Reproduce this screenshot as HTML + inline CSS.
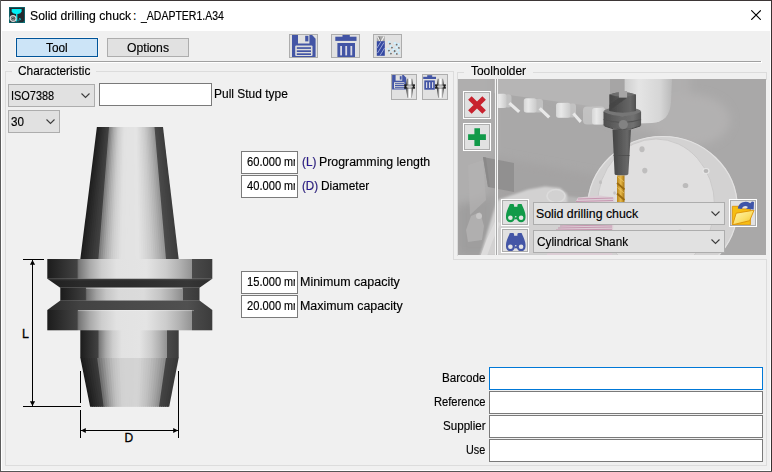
<!DOCTYPE html>
<html>
<head>
<meta charset="utf-8">
<title>Solid drilling chuck : _ADAPTER1.A34</title>
<style>
html,body{margin:0;padding:0;}
body{width:772px;height:472px;overflow:hidden;background:#f0f0f0;position:relative;
 font-family:"Liberation Sans",sans-serif;font-size:12px;color:#000;}
.abs,.t,.ln,.btn,.cb,.inp,.ib{position:absolute;box-sizing:border-box;}
.t{-webkit-text-stroke:0.16px #000;white-space:nowrap;line-height:14px;height:14px;transform-origin:0 50%;transform:scaleX(.953);}
.t.r{transform-origin:100% 50%;}
.ln{background:#dcdcdc;}
.btn{background:#e1e1e1;border:1px solid #adadad;text-align:center;}
.cb{background:#e1e1e1;border:1px solid #adadad;}
.cb svg{position:absolute;right:4px;top:8.4px;}
.inp{background:#fff;border:1px solid #7a7a7a;overflow:hidden;}
.ib{background:#e1e1e1;border:1px solid #adadad;overflow:hidden;}
.ibw{position:absolute;box-sizing:border-box;border:1px solid #fff;background:#e1e1e1;}
.ibw>div{position:absolute;left:0;top:0;right:0;bottom:0;border:1px solid #adadad;overflow:hidden;}
</style>
</head>
<body>
<!-- window frame -->
<div class="abs" style="left:0;top:0;width:772px;height:472px;background:#fff;"></div>
<div class="abs" style="left:2px;top:31px;width:768px;height:439px;background:#f0f0f0;"></div>
<div class="abs" style="left:0;top:0;width:772px;height:1px;background:#3d3636;"></div>
<div class="abs" style="left:0;top:0;width:1px;height:472px;background:#5c5c5c;"></div>
<div class="abs" style="left:771px;top:0;width:1px;height:472px;background:#3a3232;"></div>
<div class="abs" style="left:0;top:471px;width:772px;height:1px;background:#565656;"></div>

<!-- title icon -->
<svg class="abs" style="left:9px;top:7px" width="16" height="16" viewBox="0 0 16 16">
 <rect width="16" height="16" fill="#0c6f76"/>
 <path d="M0.800 0.800H15.200V13.800L13.800 15.200H0.800Z" fill="#23292e"/>
 <path d="M2.700 1.900H12.600V4.400Q12 6.400 8.800 6.900H6.600Q3.300 6.400 2.700 4.400Z" fill="#00f0f6"/>
 <rect x="7" y="6.500" width="1.400" height="8" fill="#00dfe6"/>
 <circle cx="4.100" cy="11.500" r="2.900" fill="#3a4044" stroke="#d4d4d4" stroke-width="1.300"/>
 <path d="M5.300 10.600A1.500 1.500 0 1 0 5.400 12.200H4.200" stroke="#b8b8b8" stroke-width="0.800" fill="none"/>
 <path d="M9.600 14.300L10.800 11L11.800 13.200" stroke="#00c4d0" stroke-width="0.800" fill="none"/>
</svg>
<div class="t" id="t_title" style="left:30.0px;top:9px;transform:scaleX(1.018);">Solid drilling chuck</div>
<div class="t" id="t_title2" style="left:133px;top:9px;transform:none;">:</div>
<div class="t" id="t_title3" style="left:141.0px;top:9px;transform:scaleX(0.875);">_ADAPTER1.A34</div>
<svg class="abs" style="left:751px;top:10px" width="10" height="10" viewBox="0 0 10 10"><path d="M0.300 0.300L9.800 9.800M9.800 0.300L0.300 9.800" stroke="#000" stroke-width="1.100"/></svg>

<!-- tabs/buttons -->
<div class="btn" style="left:16px;top:38px;width:82px;height:19px;background:#cce4f7;border-color:#005499;box-shadow:0 0 0 1px #f8f6f4;"></div>
<div class="t" id="t_tool" style="left:46.0px;top:41px;transform:scaleX(0.985);">Tool</div>
<div class="btn" style="left:107px;top:38px;width:82px;height:19px;"></div>
<div class="t" id="t_options" style="left:126.9px;top:41px;transform:scaleX(1.015);">Options</div>

<!-- toolbar icon buttons -->
<div class="ib" id="ib_save" style="left:289px;top:34px;width:29px;height:24px;"><svg class="abs" style="left:0;top:0" width="27" height="22" viewBox="290 35 27 22"><path d="M292 34H311.200L315.600 38.800V58H292Z" fill="#4355a5"/><rect x="298" y="34" width="11.400" height="9.500" fill="#e1e1e1"/><rect x="305.200" y="35.800" width="3.200" height="5.600" fill="#4355a5"/><rect x="295.200" y="45.500" width="17.300" height="10.500" rx="1" fill="#dcdcdc"/><rect x="296.800" y="47.200" width="14.200" height="1.700" fill="#4355a5"/><rect x="296.800" y="50.300" width="14.200" height="1.700" fill="#4355a5"/><rect x="296.800" y="53.300" width="14.200" height="1.700" fill="#4355a5"/></svg>
</div>
<div class="ib" id="ib_trash" style="left:331px;top:34px;width:29px;height:24px;"><svg class="abs" style="left:0;top:0" width="27" height="22" viewBox="332 35 27 22"><rect x="342.500" y="34" width="7.300" height="3" fill="#4355a5"/><rect x="335.300" y="36.700" width="21.200" height="4.200" fill="#4355a5"/><rect x="337.400" y="43" width="17.600" height="15" fill="#4355a5"/><rect x="340.200" y="46" width="1.800" height="9.400" fill="#d8d8e4"/><rect x="345.300" y="46" width="1.800" height="9.400" fill="#d8d8e4"/><rect x="350.400" y="46" width="1.800" height="9.400" fill="#d8d8e4"/></svg>
</div>
<div class="ib" id="ib_tool" style="left:373px;top:34px;width:29px;height:24px;"><svg class="abs" style="left:0;top:0" width="27" height="22" viewBox="374 35 27 22"><rect x="376.800" y="36.200" width="8" height="5.200" fill="#a8a8a8"/><path d="M377.500 36.500L380 41M384 36.500L381.500 41" stroke="#f4f4f4" stroke-width="1.200"/><path d="M378.800 36.400L380.600 41" stroke="#555" stroke-width="0.600"/><rect x="376.800" y="41.200" width="8" height="14.600" fill="#3448a2"/><path d="M377 48L381 41.500M377.500 53L384 42.500M380 55.500L384.600 48" stroke="#9aa6d6" stroke-width="1"/><g fill="#dff6ff" stroke="#c2ecff" stroke-width="0.500"><rect x="388.500" y="41.500" width="1.600" height="1.600"/><rect x="394" y="42.500" width="2" height="1.600"/><rect x="397.500" y="43.500" width="1.800" height="1.800"/><rect x="390" y="45.500" width="1.800" height="1.600"/><rect x="395.500" y="46.500" width="1.800" height="1.600"/><rect x="387.500" y="48.500" width="1.600" height="1.600"/><rect x="392.500" y="49" width="2" height="1.800"/><rect x="397" y="49.500" width="1.800" height="1.600"/><rect x="389" y="51.500" width="1.800" height="1.600"/><rect x="394.500" y="52" width="2" height="1.800"/><rect x="398.500" y="52.500" width="1.400" height="1.400"/></g><g fill="#6e6e6e" stroke="#6e6e6e" stroke-width="0.300"><rect x="389.500" y="43" width="1.200" height="1.200"/><rect x="396" y="44" width="1.200" height="1.200"/><rect x="391.500" y="47" width="1.200" height="1.200"/><rect x="398.500" y="47.500" width="1.200" height="1.200"/><rect x="388.500" y="50" width="1.200" height="1.200"/><rect x="394" y="50.800" width="1.200" height="1.200"/><rect x="390.500" y="53" width="1.200" height="1.200"/><rect x="396.300" y="53.600" width="1.200" height="1.200"/></g></svg>
</div>

<!-- separator -->
<div class="ln" style="left:8px;top:61px;width:753px;height:1px;background:#a0a0a0;"></div>
<div class="ln" style="left:8px;top:62px;width:754px;height:1px;background:#fff;"></div><div class="ln" style="left:761px;top:61px;width:1px;height:1px;background:#fff;"></div>

<!-- Characteristic group -->
<div class="ln" style="left:5px;top:71px;width:1px;height:395px;"></div>
<div class="ln" style="left:5px;top:465px;width:762px;height:1px;"></div>
<div class="ln" style="left:766px;top:259px;width:1px;height:207px;"></div>
<div class="ln" style="left:5px;top:71px;width:7px;height:1px;"></div>
<div class="ln" style="left:96px;top:71px;width:358px;height:1px;"></div>
<div class="ln" style="left:453px;top:71px;width:1px;height:189px;"></div>
<div class="ln" style="left:453px;top:259px;width:314px;height:1px;"></div>
<div class="t" id="t_char" style="left:17.8px;top:64px;transform:scaleX(0.986);">Characteristic</div>

<!-- Toolholder group -->
<div class="ln" style="left:457px;top:72px;width:7px;height:1px;"></div>
<div class="ln" style="left:533px;top:72px;width:234px;height:1px;"></div>
<div class="ln" style="left:766px;top:72px;width:1px;height:8px;"></div>
<div class="ln" style="left:457px;top:72px;width:1px;height:184px;"></div>
<div class="t" id="t_th" style="left:471.0px;top:64px;transform:scaleX(0.995);">Toolholder</div>


<!-- characteristic controls -->
<div class="cb" style="left:8px;top:84px;width:87px;height:23px;"><svg width="9" height="6" viewBox="0 0 9 6"><path d="M0.5 0.5L4.5 4.5L8.5 0.5" stroke="#3c3c3c" stroke-width="1.1" fill="none"/></svg></div>
<div class="t" id="t_iso" style="left:11.2px;top:89px;transform:scaleX(0.911);">ISO7388</div>
<div class="inp" style="left:99px;top:83px;width:113px;height:23px;"></div>
<div class="t" id="t_pull" style="left:213.5px;top:87px;transform:scaleX(0.997);">Pull Stud type</div>
<div class="cb" style="left:8px;top:110px;width:52px;height:23px;"><svg width="9" height="6" viewBox="0 0 9 6"><path d="M0.5 0.5L4.5 4.5L8.5 0.5" stroke="#3c3c3c" stroke-width="1.1" fill="none"/></svg></div>
<div class="t" id="t_30" style="left:11.1px;top:115px;transform:scaleX(0.971);">30</div>

<div class="ib" id="ib_s2" style="left:391px;top:74px;width:26px;height:26px;"><svg class="abs" style="left:0;top:0" width="24" height="24" viewBox="392 75 24 24"><path d="M392.100 75.100H403.600L406.200 77.800V89.500H392.100Z" fill="#4355a5"/><rect x="395.600" y="75.100" width="6.600" height="5.600" fill="#e1e1e1"/><rect x="399.800" y="76.200" width="1.800" height="3.400" fill="#4355a5"/><rect x="394" y="82.200" width="10.400" height="6.300" fill="#dcdcdc"/><rect x="395" y="83.200" width="9" height="1" fill="#4355a5"/><rect x="395" y="85" width="9" height="1" fill="#4355a5"/><rect x="395" y="86.800" width="9" height="1" fill="#4355a5"/><defs><linearGradient id="gm404" x1="405.6" y1="0" x2="413.6" y2="0" gradientUnits="userSpaceOnUse"><stop offset="0" stop-color="#111"/><stop offset="0.22" stop-color="#777"/><stop offset="0.42" stop-color="#fff"/><stop offset="0.6" stop-color="#fff"/><stop offset="0.8" stop-color="#888"/><stop offset="1" stop-color="#111"/></linearGradient></defs><path d="M407.0 78.7L412.2 78.7L413.2 84.6L415.0 84.6L415.0 85.6L413.8 86.6L415.0 87.6L415.0 88.6L413.2 88.6L411.8 97.8L407.4 97.8L406.0 88.6L404.2 88.6L404.2 87.6L405.4 86.6L404.2 85.6L404.2 84.6L406.0 84.6Z" fill="url(#gm404)"/><rect x="404.2" y="84.600" width="10.800" height="4" fill="#222" opacity="0.550"/><ellipse cx="409.6" cy="86.600" rx="3.200" ry="1.300" fill="#c8c8c8"/></svg></div>
<div class="ib" id="ib_t2" style="left:422px;top:74px;width:26px;height:26px;"><svg class="abs" style="left:0;top:0" width="24" height="24" viewBox="423 75 24 24"><rect x="427.200" y="75.200" width="5" height="2" fill="#4355a5"/><rect x="423.200" y="76.800" width="12.800" height="2.200" fill="#4355a5"/><rect x="424.300" y="80.400" width="10.500" height="9.300" fill="#4355a5"/><rect x="426" y="82.200" width="1.200" height="5.800" fill="#d8d8e4"/><rect x="429" y="82.200" width="1.200" height="5.800" fill="#d8d8e4"/><rect x="432" y="82.200" width="1.200" height="5.800" fill="#d8d8e4"/><defs><linearGradient id="gm435" x1="436.4" y1="0" x2="444.4" y2="0" gradientUnits="userSpaceOnUse"><stop offset="0" stop-color="#111"/><stop offset="0.22" stop-color="#777"/><stop offset="0.42" stop-color="#fff"/><stop offset="0.6" stop-color="#fff"/><stop offset="0.8" stop-color="#888"/><stop offset="1" stop-color="#111"/></linearGradient></defs><path d="M437.8 78.7L443.0 78.7L444.0 84.6L445.8 84.6L445.8 85.6L444.6 86.6L445.8 87.6L445.8 88.6L444.0 88.6L442.6 97.8L438.2 97.8L436.8 88.6L435.0 88.6L435.0 87.6L436.2 86.6L435.0 85.6L435.0 84.6L436.8 84.6Z" fill="url(#gm435)"/><rect x="435.0" y="84.600" width="10.800" height="4" fill="#222" opacity="0.550"/><ellipse cx="440.4" cy="86.600" rx="3.200" ry="1.300" fill="#c8c8c8"/></svg></div>

<svg class="abs" style="left:0;top:0" width="240" height="472" viewBox="0 0 240 472">
<defs><linearGradient id="tg1" x1="0" y1="0" x2="1" y2="0"><stop offset="0" stop-color="#1c1c1c"/><stop offset="0.18" stop-color="#424242"/><stop offset="0.19" stop-color="#767676"/><stop offset="0.26" stop-color="#aaaaaa"/><stop offset="0.33" stop-color="#cdcdcd"/><stop offset="0.42" stop-color="#e2e2e2"/><stop offset="0.6" stop-color="#e4e4e4"/><stop offset="0.72" stop-color="#cccccc"/><stop offset="0.8" stop-color="#b2b2b2"/><stop offset="0.88" stop-color="#929292"/><stop offset="0.88" stop-color="#4a4a4a"/><stop offset="1" stop-color="#3c3c3c"/></linearGradient><linearGradient id="tg2" x1="0" y1="0" x2="1" y2="0"><stop offset="0" stop-color="#1b1b1b"/><stop offset="0.18" stop-color="#3f3f3f"/><stop offset="0.19" stop-color="#717171"/><stop offset="0.26" stop-color="#a3a3a3"/><stop offset="0.33" stop-color="#c5c5c5"/><stop offset="0.42" stop-color="#d9d9d9"/><stop offset="0.6" stop-color="#dbdbdb"/><stop offset="0.72" stop-color="#c4c4c4"/><stop offset="0.8" stop-color="#ababab"/><stop offset="0.88" stop-color="#8c8c8c"/><stop offset="0.88" stop-color="#474747"/><stop offset="1" stop-color="#3a3a3a"/></linearGradient><linearGradient id="tgd1" x1="0" y1="0" x2="1" y2="0"><stop offset="0" stop-color="#1e1e1e"/><stop offset="0.2" stop-color="#2a2a2a"/><stop offset="0.5" stop-color="#2c2c2c"/><stop offset="0.85" stop-color="#363636"/><stop offset="1" stop-color="#2c2c2c"/></linearGradient><linearGradient id="tgd2" x1="0" y1="0" x2="1" y2="0"><stop offset="0" stop-color="#2a2a2a"/><stop offset="0.2" stop-color="#424242"/><stop offset="0.5" stop-color="#4a4a4a"/><stop offset="0.85" stop-color="#505050"/><stop offset="1" stop-color="#3a3a3a"/></linearGradient></defs>
<clipPath id="tc1"><polygon points="96.9,127 163,127 178.7,259.2 80.3,259.2"/></clipPath>
<g clip-path="url(#tc1)">
<polygon fill="#1e1e1e" points="93.73,126 99.19,126 83.41,260.2 75.24,260.2"/>
<polygon fill="#232323" points="98.13,126 100.56,126 85.47,260.2 81.83,260.2"/>
<polygon fill="#272727" points="99.51,126 101.93,126 87.52,260.2 83.89,260.2"/>
<polygon fill="#2b2b2b" points="100.88,126 103.3,126 89.58,260.2 85.95,260.2"/>
<polygon fill="#303030" points="102.25,126 104.68,126 91.63,260.2 88,260.2"/>
<polygon fill="#343434" points="103.62,126 106.05,126 93.69,260.2 90.06,260.2"/>
<polygon fill="#393939" points="104.99,126 107.42,126 95.74,260.2 92.11,260.2"/>
<polygon fill="#3d3d3d" points="106.37,126 108.79,126 97.8,260.2 94.17,260.2"/>
<polygon fill="#414141" points="107.74,126 110.16,126 99.85,260.2 96.22,260.2"/>
<polygon fill="#7e7e7e" points="109.11,126 111.54,126 101.91,260.2 98.28,260.2"/>
<polygon fill="#8d8d8d" points="110.48,126 112.91,126 103.96,260.2 100.33,260.2"/>
<polygon fill="#9c9c9c" points="111.85,126 114.28,126 106.02,260.2 102.39,260.2"/>
<polygon fill="#aaaaaa" points="113.23,126 115.65,126 108.07,260.2 104.44,260.2"/>
<polygon fill="#b5b5b5" points="114.6,126 117.02,126 110.13,260.2 106.5,260.2"/>
<polygon fill="#bfbfbf" points="115.97,126 118.4,126 112.18,260.2 108.55,260.2"/>
<polygon fill="#c9c9c9" points="117.34,126 119.77,126 114.24,260.2 110.61,260.2"/>
<polygon fill="#d0d0d0" points="118.71,126 121.14,126 116.29,260.2 112.66,260.2"/>
<polygon fill="#d5d5d5" points="120.09,126 122.51,126 118.35,260.2 114.72,260.2"/>
<polygon fill="#dadada" points="121.46,126 123.88,126 120.4,260.2 116.77,260.2"/>
<polygon fill="#dfdfdf" points="122.83,126 125.26,126 122.46,260.2 118.83,260.2"/>
<polygon fill="#e2e2e2" points="124.2,126 126.63,126 124.52,260.2 120.88,260.2"/>
<polygon fill="#e2e2e2" points="125.57,126 128,126 126.57,260.2 122.94,260.2"/>
<polygon fill="#e3e3e3" points="126.95,126 129.37,126 128.63,260.2 124.99,260.2"/>
<polygon fill="#e3e3e3" points="128.32,126 130.74,126 130.68,260.2 127.05,260.2"/>
<polygon fill="#e3e3e3" points="129.69,126 132.12,126 132.74,260.2 129.1,260.2"/>
<polygon fill="#e3e3e3" points="131.06,126 133.49,126 134.79,260.2 131.16,260.2"/>
<polygon fill="#e3e3e3" points="132.43,126 134.86,126 136.85,260.2 133.21,260.2"/>
<polygon fill="#e4e4e4" points="133.81,126 136.23,126 138.9,260.2 135.27,260.2"/>
<polygon fill="#e4e4e4" points="135.18,126 137.6,126 140.96,260.2 137.32,260.2"/>
<polygon fill="#e1e1e1" points="136.55,126 138.98,126 143.01,260.2 139.38,260.2"/>
<polygon fill="#dddddd" points="137.92,126 140.35,126 145.07,260.2 141.43,260.2"/>
<polygon fill="#d9d9d9" points="139.29,126 141.72,126 147.12,260.2 143.49,260.2"/>
<polygon fill="#d5d5d5" points="140.67,126 143.09,126 149.18,260.2 145.54,260.2"/>
<polygon fill="#d0d0d0" points="142.04,126 144.46,126 151.23,260.2 147.6,260.2"/>
<polygon fill="#cccccc" points="143.41,126 145.84,126 153.29,260.2 149.65,260.2"/>
<polygon fill="#c6c6c6" points="144.78,126 147.21,126 155.34,260.2 151.71,260.2"/>
<polygon fill="#bfbfbf" points="146.15,126 148.58,126 157.4,260.2 153.76,260.2"/>
<polygon fill="#b8b8b8" points="147.53,126 149.95,126 159.45,260.2 155.82,260.2"/>
<polygon fill="#b1b1b1" points="148.9,126 151.32,126 161.51,260.2 157.87,260.2"/>
<polygon fill="#a8a8a8" points="150.27,126 152.7,126 163.56,260.2 159.93,260.2"/>
<polygon fill="#9f9f9f" points="151.64,126 154.07,126 165.62,260.2 161.98,260.2"/>
<polygon fill="#969696" points="153.01,126 155.44,126 167.67,260.2 164.04,260.2"/>
<polygon fill="#4a4a4a" points="154.39,126 156.81,126 169.73,260.2 166.09,260.2"/>
<polygon fill="#474747" points="155.76,126 158.18,126 171.78,260.2 168.15,260.2"/>
<polygon fill="#454545" points="157.13,126 159.56,126 173.84,260.2 170.2,260.2"/>
<polygon fill="#424242" points="158.5,126 160.93,126 175.89,260.2 172.26,260.2"/>
<polygon fill="#404040" points="159.87,126 162.3,126 177.95,260.2 174.31,260.2"/>
<polygon fill="#3d3d3d" points="161.25,126 166.17,126 183.75,260.2 176.37,260.2"/>
</g>
<clipPath id="tc2"><polygon points="80.3,357.8 178.7,357.8 169.2,406.7 90.1,406.7"/></clipPath>
<g clip-path="url(#tc2)">
<polygon fill="#1c1c1c" points="75.16,356.8 83.75,356.8 93.21,407.7 86.37,407.7"/>
<polygon fill="#212121" points="82.17,356.8 86.22,356.8 95.18,407.7 91.95,407.7"/>
<polygon fill="#262626" points="84.64,356.8 88.69,356.8 97.15,407.7 93.92,407.7"/>
<polygon fill="#2b2b2b" points="87.11,356.8 91.16,356.8 99.12,407.7 95.89,407.7"/>
<polygon fill="#303030" points="89.58,356.8 93.63,356.8 101.08,407.7 97.86,407.7"/>
<polygon fill="#353535" points="92.05,356.8 96.1,356.8 103.05,407.7 99.82,407.7"/>
<polygon fill="#3a3a3a" points="94.52,356.8 98.57,356.8 105.02,407.7 101.79,407.7"/>
<polygon fill="#6f6f6f" points="96.99,356.8 101.04,356.8 106.99,407.7 103.76,407.7"/>
<polygon fill="#7f7f7f" points="99.46,356.8 103.51,356.8 108.95,407.7 105.73,407.7"/>
<polygon fill="#8f8f8f" points="101.93,356.8 105.98,356.8 110.92,407.7 107.69,407.7"/>
<polygon fill="#9f9f9f" points="104.4,356.8 108.45,356.8 112.89,407.7 109.66,407.7"/>
<polygon fill="#ababab" points="106.87,356.8 110.92,356.8 114.86,407.7 111.63,407.7"/>
<polygon fill="#b7b7b7" points="109.34,356.8 113.39,356.8 116.82,407.7 113.6,407.7"/>
<polygon fill="#c0c0c0" points="111.81,356.8 115.86,356.8 118.79,407.7 115.56,407.7"/>
<polygon fill="#c6c6c6" points="114.28,356.8 118.33,356.8 120.76,407.7 117.53,407.7"/>
<polygon fill="#cbcbcb" points="116.75,356.8 120.8,356.8 122.73,407.7 119.5,407.7"/>
<polygon fill="#d1d1d1" points="119.22,356.8 123.27,356.8 124.69,407.7 121.47,407.7"/>
<polygon fill="#d2d2d2" points="121.69,356.8 125.74,356.8 126.66,407.7 123.44,407.7"/>
<polygon fill="#d3d3d3" points="124.16,356.8 128.21,356.8 128.63,407.7 125.4,407.7"/>
<polygon fill="#d3d3d3" points="126.63,356.8 130.68,356.8 130.6,407.7 127.37,407.7"/>
<polygon fill="#d3d3d3" points="129.1,356.8 133.15,356.8 132.57,407.7 129.34,407.7"/>
<polygon fill="#d3d3d3" points="131.57,356.8 135.62,356.8 134.53,407.7 131.31,407.7"/>
<polygon fill="#d4d4d4" points="134.04,356.8 138.09,356.8 136.5,407.7 133.27,407.7"/>
<polygon fill="#d4d4d4" points="136.51,356.8 140.56,356.8 138.47,407.7 135.24,407.7"/>
<polygon fill="#d2d2d2" points="138.98,356.8 143.03,356.8 140.44,407.7 137.21,407.7"/>
<polygon fill="#cdcdcd" points="141.45,356.8 145.5,356.8 142.4,407.7 139.18,407.7"/>
<polygon fill="#c8c8c8" points="143.92,356.8 147.97,356.8 144.37,407.7 141.14,407.7"/>
<polygon fill="#c4c4c4" points="146.39,356.8 150.44,356.8 146.34,407.7 143.11,407.7"/>
<polygon fill="#bfbfbf" points="148.86,356.8 152.91,356.8 148.31,407.7 145.08,407.7"/>
<polygon fill="#b8b8b8" points="151.33,356.8 155.38,356.8 150.27,407.7 147.05,407.7"/>
<polygon fill="#b1b1b1" points="153.8,356.8 157.85,356.8 152.24,407.7 149.01,407.7"/>
<polygon fill="#a9a9a9" points="156.27,356.8 160.32,356.8 154.21,407.7 150.98,407.7"/>
<polygon fill="#a1a1a1" points="158.74,356.8 162.79,356.8 156.18,407.7 152.95,407.7"/>
<polygon fill="#979797" points="161.21,356.8 165.26,356.8 158.14,407.7 154.92,407.7"/>
<polygon fill="#8d8d8d" points="163.68,356.8 167.73,356.8 160.11,407.7 156.89,407.7"/>
<polygon fill="#444444" points="166.15,356.8 170.2,356.8 162.08,407.7 158.85,407.7"/>
<polygon fill="#414141" points="168.62,356.8 172.67,356.8 164.05,407.7 160.82,407.7"/>
<polygon fill="#3f3f3f" points="171.09,356.8 175.14,356.8 166.01,407.7 162.79,407.7"/>
<polygon fill="#3c3c3c" points="173.56,356.8 177.61,356.8 167.98,407.7 164.76,407.7"/>
<polygon fill="#393939" points="176.03,356.8 183.83,356.8 172.94,407.7 166.72,407.7"/>
</g>
<rect x="80.3" y="330" width="98.4" height="28" fill="url(#tg1)"/>
<rect x="47.3" y="259" width="165" height="19.8" fill="url(#tg1)"/>
<polygon points="47.3,278.7 212.3,278.7 199.5,287.8 60.3,287.8" fill="url(#tgd1)"/>
<rect x="60.3" y="287.7" width="139.2" height="13" fill="url(#tg2)"/>
<polygon points="60.3,300.6 199.5,300.6 212.3,310 47.3,310" fill="url(#tgd2)"/>
<rect x="47.3" y="310" width="165" height="20.3" fill="url(#tg1)"/>
<rect x="86" y="287.8" width="96" height="1.2" fill="#fff" opacity="0.3"/>
<rect x="78" y="310" width="116" height="1.1" fill="#fff" opacity="0.3"/>
<rect x="47.3" y="278.7" width="165" height="1.6" fill="#fff" opacity="0.08"/>
<g stroke="#000" stroke-width="1" fill="none" shape-rendering="crispEdges">
<path d="M23 259.5H44M23 406.5H81M32.5 260V406M80.5 371V403M80.5 410V438M178.5 371V438M81 430.5H178"/>
</g>
<g fill="#000">
<path d="M32.5 260l-2.6 4.800h5.200zM32.500 406l-2.600-4.800h5.200zM81 430.500l4.800-2.600v5.200zM178 430.500l-4.800-2.600v5.200z"/>
</g>
<text x="22" y="338.3" font-family="Liberation Sans, sans-serif" font-size="12.4" fill="#000" stroke="#000" stroke-width="0.3">L</text>
<text x="124.5" y="442" font-family="Liberation Sans, sans-serif" font-size="12" fill="#000" stroke="#000" stroke-width="0.3">D</text>
</svg>

<!-- numeric fields -->
<div class="inp" style="left:241px;top:151px;width:57px;height:23px;"><div class="abs" style="left:0;top:0;width:53px;height:21px;overflow:hidden;"><div class="t" id="t_f1" style="left:5px;top:3px;transform:scaleX(.93);">60.000</div><div class="t" id="t_u1" style="left:41.700px;top:3px;transform:scaleX(.9);">mm</div></div></div>
<div class="inp" style="left:241px;top:175px;width:57px;height:23px;"><div class="abs" style="left:0;top:0;width:53px;height:21px;overflow:hidden;"><div class="t" id="t_f2" style="left:5px;top:3px;transform:scaleX(.93);">40.000</div><div class="t" id="t_u2" style="left:41.700px;top:3px;transform:scaleX(.9);">mm</div></div></div>
<div class="inp" style="left:241px;top:271px;width:57px;height:23px;"><div class="abs" style="left:0;top:0;width:53px;height:21px;overflow:hidden;"><div class="t" id="t_f3" style="left:5px;top:3px;transform:scaleX(.93);">15.000</div><div class="t" id="t_u3" style="left:41.700px;top:3px;transform:scaleX(.9);">mm</div></div></div>
<div class="inp" style="left:241px;top:295px;width:57px;height:23px;"><div class="abs" style="left:0;top:0;width:53px;height:21px;overflow:hidden;"><div class="t" id="t_f4" style="left:5px;top:3px;transform:scaleX(.93);">20.000</div><div class="t" id="t_u4" style="left:41.700px;top:3px;transform:scaleX(.9);">mm</div></div></div>
<div class="t" id="t_l1a" style="left:301.5px;top:155px;transform:scaleX(0.977);color:#2b1a9a;">(L)</div>
<div class="t" id="t_l1" style="left:318.8px;top:155px;transform:scaleX(1.029);">Programming length</div>
<div class="t" id="t_l2a" style="left:301.5px;top:179px;transform:scaleX(0.967);color:#2b1a9a;">(D)</div>
<div class="t" id="t_l2" style="left:320.7px;top:179px;transform:scaleX(0.99);">Diameter</div>
<div class="t" id="t_l3" style="left:299.7px;top:275px;transform:scaleX(1.04);">Minimum capacity</div>
<div class="t" id="t_l4" style="left:299.7px;top:299px;transform:scaleX(1.034);">Maximum capacity</div>

<!-- bottom right fields -->
<div class="inp" style="left:489px;top:367px;width:274px;height:23px;border-color:#0078d7;"></div>
<div class="inp" style="left:489px;top:391px;width:274px;height:23px;"></div>
<div class="inp" style="left:489px;top:415px;width:274px;height:23px;"></div>
<div class="inp" style="left:489px;top:439px;width:274px;height:23px;"></div>
<div class="t" id="t_bar" style="left:442.3px;top:371px;transform:scaleX(0.97);">Barcode</div>
<div class="t" id="t_ref" style="left:433.8px;top:395px;transform:scaleX(0.93);">Reference</div>
<div class="t" id="t_sup" style="left:442.5px;top:419px;transform:scaleX(0.966);">Supplier</div>
<div class="t" id="t_use" style="left:466.1px;top:443px;transform:scaleX(0.9);">Use</div>

<!-- photo background of toolholder panel -->
<svg class="abs" style="left:458px;top:79px" width="308" height="176" viewBox="458 79 308 176">
<defs>
 <filter id="bl1" x="-5%" y="-5%" width="110%" height="110%"><feGaussianBlur stdDeviation="0.7"/></filter>
 <filter id="bl2" x="-10%" y="-10%" width="120%" height="120%"><feGaussianBlur stdDeviation="1"/></filter>
 <filter id="bl4" x="-20%" y="-20%" width="140%" height="140%"><feGaussianBlur stdDeviation="4"/></filter>
 <linearGradient id="gbg" x1="0" y1="0" x2="0" y2="1"><stop offset="0" stop-color="#adadad"/><stop offset="1" stop-color="#a2a2a2"/></linearGradient>
 <linearGradient id="gsp" x1="0" y1="0" x2="1" y2="0"><stop offset="0" stop-color="#cecece"/><stop offset="0.300" stop-color="#e4e4e4"/><stop offset="0.750" stop-color="#d6d6d6"/><stop offset="1" stop-color="#bababa"/></linearGradient>
 <linearGradient id="gpot" x1="0" y1="0" x2="1" y2="0"><stop offset="0" stop-color="#d6d6d6"/><stop offset="0.350" stop-color="#e8e8e8"/><stop offset="1" stop-color="#cacaca"/></linearGradient>
 <linearGradient id="ghold" x1="0" y1="0" x2="1" y2="0"><stop offset="0" stop-color="#444"/><stop offset="0.450" stop-color="#585858"/><stop offset="0.800" stop-color="#676767"/><stop offset="1" stop-color="#505050"/></linearGradient>
 <linearGradient id="ghold2" x1="0" y1="0" x2="1" y2="0"><stop offset="0" stop-color="#4e4e4e"/><stop offset="0.450" stop-color="#686868"/><stop offset="0.800" stop-color="#707070"/><stop offset="1" stop-color="#565656"/></linearGradient>
 <linearGradient id="gdrill" x1="0" y1="0" x2="1" y2="0"><stop offset="0" stop-color="#b8861e"/><stop offset="0.5" stop-color="#e6b84a"/><stop offset="1" stop-color="#a87410"/></linearGradient>
</defs>
<rect x="458" y="79" width="308" height="176" fill="#a9a8a8"/>
<g filter="url(#bl4)">
 <!-- lighter band around pots -->
 <polygon points="494,70 690,70 690,100 700,140 640,130 612,122" fill="#b0afaf"/>
 <!-- lighter halo right of spindle -->
 <ellipse cx="690" cy="120" rx="40" ry="26" fill="#b2b1b1"/>
 <!-- slightly darker lower-left region -->
 <polygon points="494,156 600,176 600,200 494,200" fill="#a4a3a3"/>
 <!-- left panel -->
 <polygon points="450,70 494,70 494,150 484,200 450,205" fill="#afaeae"/>
 <polygon points="458,205 494,195 494,256 458,256" fill="#9f9e9e"/>
</g>
<g filter="url(#bl2)">
 <!-- light horizontal cylinder bottom centre -->
 <path d="M480 256C486 238 492 214 498 200L528 189.500L545 186.500L560 188L567 194L567 256Z" fill="#d2d1d1"/>
 <path d="M567 196L580 198L580 256L567 256Z" fill="#b6b5b5"/>
</g>
<g filter="url(#bl1)">
 <!-- plate -->
 <polygon points="483,157 514,163 514,192 488,187" fill="#919090"/>
 <polygon points="483,157 486,157.500 490,187 488,187" fill="#8a8989"/>
 <!-- left panel blobs -->
 <polygon points="468,165 483,160 486,200 470,215" fill="#b3b2b2" opacity="0.700"/>
 <path d="M471 216L480 212L484 226L482 240L468 242L466 230Z" fill="#b4b3b3" opacity="0.800"/>
 <circle cx="479" cy="216" r="3" fill="#c6c5c5"/>
 <!-- white ring band -->
 <path d="M483 258C487 246 491 236 498 222" stroke="#dddcdc" stroke-width="6" fill="none"/>
 <ellipse cx="556" cy="196" rx="9" ry="6.500" fill="none" stroke="#e0dfdf" stroke-width="1.600" opacity="0.700"/>
 <!-- disk -->
 <ellipse cx="662.500" cy="208" rx="75.300" ry="72" fill="#d3d2d2"/>
 <ellipse cx="662.500" cy="208" rx="74.800" ry="71.500" fill="none" stroke="#e2e1e1" stroke-width="1.200"/>
 <ellipse cx="656" cy="205" rx="58.500" ry="66" fill="#e0dfdf"/>
 <ellipse cx="656" cy="205" rx="58.500" ry="66" fill="none" stroke="#c6c5c5" stroke-width="0.800"/>
 <!-- holes -->
 <ellipse cx="642" cy="149.300" rx="2.600" ry="3" fill="#bebdbd"/>
 <ellipse cx="644.800" cy="170.600" rx="2.600" ry="2.800" fill="#bfbebe"/>
 <ellipse cx="685.500" cy="185.500" rx="2.800" ry="2.600" fill="#bcbbbb"/>
 <ellipse cx="706" cy="171" rx="3.600" ry="3" fill="#e6e6e6"/>
 <ellipse cx="706" cy="171" rx="2.400" ry="1.900" fill="#b8b7b7"/>
 <ellipse cx="600.500" cy="182.200" rx="1.400" ry="2" fill="#c0bfbf"/>
 <ellipse cx="614.600" cy="193" rx="1.400" ry="1.800" fill="#c4c3c3"/>
 <ellipse cx="680" cy="232" rx="2.600" ry="2.400" fill="#c4c3c3"/>
 <!-- pink workpiece -->
 <polygon points="578,197.500 600,195.500 614.500,197.500 612,256 546,256" fill="#dccdd5"/>
 <g stroke="#c088a6" stroke-width="1" fill="none" opacity="0.800">
  <path d="M578 199L613 198M576 201.500L613 200.500M560 226L612 225M558 228L612 227M556 230L612 229.300"/>
 </g>
 <!-- pots -->
 <polygon points="494,79 612,79 612,109 494,93" fill="#b6b5b5"/>
 <g opacity="0.550" fill="#d6d5d5">
  <rect x="498" y="94.500" width="13.500" height="13" rx="3"/>
  <rect x="524" y="99" width="19" height="13.500" rx="3"/>
  <rect x="556" y="103.500" width="20" height="14" rx="3"/>
  <rect x="583" y="106.500" width="22" height="18" rx="4"/>
 </g>
 <rect x="496" y="93.800" width="10.500" height="14.200" rx="2.500" fill="url(#gpot)"/>
 <polygon points="508.300,104.200 510.500,102 520.300,110.700 518.100,112.900" fill="#e8e8e8"/>
 <rect x="523.800" y="98.300" width="12.800" height="14.200" rx="2.500" fill="url(#gpot)"/>
 <polygon points="538.600,109.400 540.800,107.200 550.300,116.200 548.100,118.400" fill="#e8e8e8"/>
 <rect x="556.100" y="102.800" width="14.300" height="15" rx="2.500" fill="url(#gpot)"/>
 <polygon points="572.300,114.600 574.500,112.400 581.900,120.800 579.700,123" fill="#e8e8e8"/>
 <rect x="592" y="108" width="13" height="16.600" rx="2.500" fill="url(#gpot)"/>
 <!-- spindle -->
 <rect x="610" y="79" width="15" height="20" fill="#a6a5a5"/>
 <path d="M624.600 79L672 79L671 102C670 116 664 122 652 123L624.600 124Z" fill="url(#gsp)"/>
 <!-- holder -->
 <ellipse cx="622.300" cy="111.800" rx="18.800" ry="4.600" fill="#767676"/>
 <path d="M603.500 111.800V125.500Q622.300 133 641.100 125.500V111.800Q622.300 120.500 603.500 111.800Z" fill="url(#ghold2)"/>
 <path d="M609.300 94.600Q622.600 89.800 636 94.600V111Q622.600 114.500 609.300 111Z" fill="url(#ghold)"/>
 <path d="M609.300 94.600Q622.600 89.800 636 94.600Q622.600 99 609.300 94.600Z" fill="#6e6e6e"/>
 <path d="M618.900 91L627.100 91L627.100 97.800L618.900 97.800Z" fill="#a6a5a5"/>
 <path d="M627.100 97.800L609.300 110.500L609.300 105L618.900 97.800Z" fill="#444" opacity="0.850"/>
 <path d="M603.600 119.500Q622 125.500 641.100 119.500" stroke="#525252" stroke-width="1.200" fill="none"/>
 <path d="M604.500 126Q622 133.500 640.300 126" stroke="#4a4a4a" stroke-width="1" fill="none"/>
 <circle cx="623.300" cy="124.500" r="4.600" fill="#828282"/>
 <path d="M612.500 129.500L631 129.500L628.300 174C628.300 176 614.600 176 614.600 174Z" fill="url(#ghold)"/>
 <path d="M613.500 155.500L629.600 155.500" stroke="#4c4c4c" stroke-width="0.800"/>
 <!-- drill -->
 <rect x="617" y="175.500" width="7.500" height="42" fill="url(#gdrill)"/>
 <path d="M617 183L624.500 189.500M617 193.500L624.500 200" stroke="#9a6a10" stroke-width="1.800"/>
 <path d="M617.500 176.500L624 182M617.500 187.500L624 193" stroke="#f0cc6a" stroke-width="1" opacity="0.700"/>
</g>
</svg>
<!-- divider in photo -->
<div class="abs" style="left:495px;top:79px;width:3px;height:176px;background:#f4f4f4;"></div>
<div class="abs" style="left:496px;top:79px;width:1px;height:176px;background:#a8a8a8;"></div>

<!-- buttons over photo -->
<div class="ibw" style="left:463px;top:91px;width:28px;height:28px;"><div><svg class="abs" style="left:0;top:0" width="24" height="24" viewBox="0 0 24 24"><path d="M4.900 4.900L19.100 19.100M19.100 4.900L4.900 19.100" stroke="#c8222e" stroke-width="5" fill="none"/></svg>
</div></div>
<div class="ibw" style="left:463px;top:123px;width:28px;height:28px;"><div><svg class="abs" style="left:0;top:0" width="24" height="24" viewBox="0 0 24 24"><path d="M12.200 3.200V21M3.100 12.100H20.900" stroke="#119a49" stroke-width="5.600" fill="none"/></svg>
</div></div>
<div class="ibw" style="left:501px;top:199px;width:28px;height:27px;"><div><svg class="abs" style="left:3px;top:3px" width="20" height="19" viewBox="0 0 20 19"><path d="M3.300 1.400Q3.300 0 4.600 0H6.800Q8.100 0 8.100 1.400V2.800H11.400V1.400Q11.400 0 12.700 0H14.900Q16.200 0 16.200 1.400C18 5 19.500 9 19.500 11.500V13.800A4.400 4.400 0 0 1 10.700 13.800V12.200H8.800V13.800A4.400 4.400 0 0 1 0 13.800V11.500C0 9 1.500 5 3.300 1.400Z" fill="#119a49"/><rect x="8.400" y="11" width="2.700" height="4.300" fill="#119a49"/><circle cx="4.400" cy="13.700" r="2.300" fill="#e6e6e6"/><circle cx="15.100" cy="13.700" r="2.300" fill="#e6e6e6"/><circle cx="9.750" cy="12.700" r="0.800" fill="#e1e1e1"/></svg>
</div></div>
<div class="ibw" style="left:501px;top:228px;width:28px;height:25px;"><div><svg class="abs" style="left:3px;top:3px" width="20" height="19" viewBox="0 0 20 19"><path d="M3.300 1.400Q3.300 0 4.600 0H6.800Q8.100 0 8.100 1.400V2.800H11.400V1.400Q11.400 0 12.700 0H14.900Q16.200 0 16.200 1.400C18 5 19.500 9 19.500 11.500V13.800A4.400 4.400 0 0 1 10.700 13.800V12.200H8.800V13.800A4.400 4.400 0 0 1 0 13.800V11.500C0 9 1.500 5 3.300 1.400Z" fill="#4456a6"/><rect x="8.400" y="11" width="2.700" height="4.300" fill="#4456a6"/><circle cx="4.400" cy="13.700" r="2.300" fill="#e6e6e6"/><circle cx="15.100" cy="13.700" r="2.300" fill="#e6e6e6"/><circle cx="9.750" cy="12.700" r="0.800" fill="#e1e1e1"/></svg>
</div></div>
<div class="ibw" style="left:729px;top:199px;width:28px;height:28px;"><div><svg class="abs" style="left:0;top:0" width="24" height="24" viewBox="731 201 24 24"><defs><linearGradient id="gfo" x1="0" y1="0" x2="1" y2="1"><stop offset="0" stop-color="#fff6b8"/><stop offset="0.55" stop-color="#fbe06a"/><stop offset="1" stop-color="#f2c022"/></linearGradient></defs><path d="M732.300 206.300H741L742.300 208.900H750.400V224.800H732.300Z" fill="#f6bd12" stroke="#d98e04" stroke-width="0.800"/><path d="M736.200 213.200L754 210.200L749.700 220.700L732.600 224.800Z" fill="url(#gfo)" stroke="#dc9206" stroke-width="0.900" stroke-linejoin="round"/><path d="M737.800 208.400C738.600 203 745 199.800 750.200 203.200L752 201.600L754 202L753.700 209.600L746.200 208.800L748 206.900C745.400 205.300 742.600 206.200 741.700 209Z" fill="#3f55a8"/></svg>
</div></div>
<div class="cb" style="left:533px;top:202px;width:192px;height:23px;"><svg width="9" height="6" viewBox="0 0 9 6"><path d="M0.5 0.5L4.5 4.5L8.5 0.5" stroke="#3c3c3c" stroke-width="1.1" fill="none"/></svg></div>
<div class="t" id="t_c1" style="left:536.1px;top:207px;transform:scaleX(1.028);">Solid drilling chuck</div>
<div class="cb" style="left:533px;top:230px;width:192px;height:23px;"><svg width="9" height="6" viewBox="0 0 9 6"><path d="M0.5 0.5L4.5 4.5L8.5 0.5" stroke="#3c3c3c" stroke-width="1.1" fill="none"/></svg></div>
<div class="t" id="t_c2" style="left:536.5px;top:235px;transform:scaleX(0.983);">Cylindrical Shank</div>

</body>
</html>
